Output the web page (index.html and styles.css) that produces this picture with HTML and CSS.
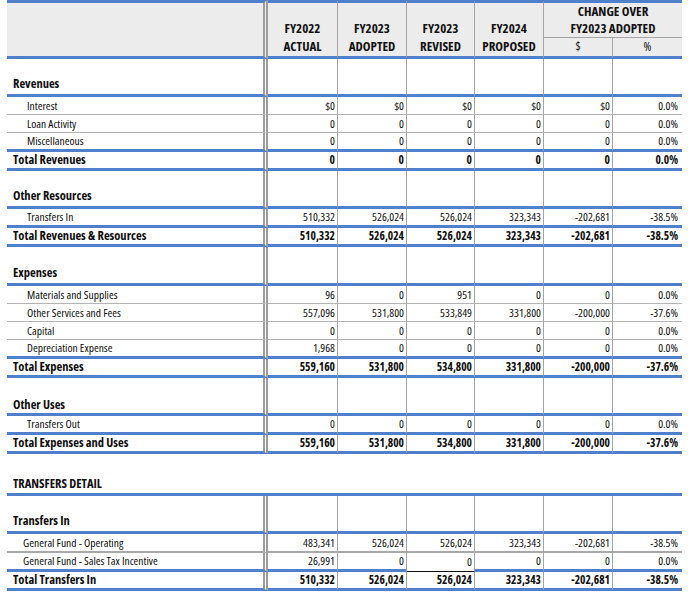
FILE: index.html
```html
<!DOCTYPE html>
<html>
<head>
<meta charset="utf-8">
<link rel="stylesheet" href="styles.css">
</head>
<body>
<div class="page">
<table class="budget">
  <colgroup>
    <col class="c-lbl"><col class="c-a"><col class="c-b"><col class="c-c"><col class="c-d"><col class="c-e"><col class="c-f">
  </colgroup>
  <thead>
    <tr class="hdr-a">
      <th class="lbl" rowspan="2"></th>
      <th class="yr" rowspan="2">FY2022<br>ACTUAL</th>
      <th class="yr" rowspan="2">FY2023<br>ADOPTED</th>
      <th class="yr" rowspan="2">FY2023<br>REVISED</th>
      <th class="yr" rowspan="2">FY2024<br>PROPOSED</th>
      <th class="chg" colspan="2">CHANGE OVER<br>FY2023 ADOPTED</th>
    </tr>
    <tr class="hdr-b">
      <th class="sub">$</th>
      <th class="sub end">%</th>
    </tr>
  </thead>
  <tbody>
    <tr class="sec"><td class="lbl">Revenues</td><td></td><td></td><td></td><td></td><td></td><td class="end"></td></tr>
    <tr class="item"><td class="lbl">Interest</td><td>$0</td><td>$0</td><td>$0</td><td>$0</td><td>$0</td><td class="end">0.0%</td></tr>
    <tr class="item"><td class="lbl">Loan Activity</td><td>0</td><td>0</td><td>0</td><td>0</td><td>0</td><td class="end">0.0%</td></tr>
    <tr class="item last"><td class="lbl">Miscellaneous</td><td>0</td><td>0</td><td>0</td><td>0</td><td>0</td><td class="end">0.0%</td></tr>
    <tr class="tot"><td class="lbl">Total Revenues</td><td>0</td><td>0</td><td>0</td><td>0</td><td>0</td><td class="end">0.0%</td></tr>

    <tr class="sec"><td class="lbl">Other Resources</td><td></td><td></td><td></td><td></td><td></td><td class="end"></td></tr>
    <tr class="item last"><td class="lbl">Transfers In</td><td>510,332</td><td>526,024</td><td>526,024</td><td>323,343</td><td>-202,681</td><td class="end">-38.5%</td></tr>
    <tr class="tot"><td class="lbl">Total Revenues &amp; Resources</td><td>510,332</td><td>526,024</td><td>526,024</td><td>323,343</td><td>-202,681</td><td class="end">-38.5%</td></tr>

    <tr class="sec tall"><td class="lbl">Expenses</td><td></td><td></td><td></td><td></td><td></td><td class="end"></td></tr>
    <tr class="item"><td class="lbl">Materials and Supplies</td><td>96</td><td>0</td><td>951</td><td>0</td><td>0</td><td class="end">0.0%</td></tr>
    <tr class="item"><td class="lbl">Other Services and Fees</td><td>557,096</td><td>531,800</td><td>533,849</td><td>331,800</td><td>-200,000</td><td class="end">-37.6%</td></tr>
    <tr class="item"><td class="lbl">Capital</td><td>0</td><td>0</td><td>0</td><td>0</td><td>0</td><td class="end">0.0%</td></tr>
    <tr class="item last"><td class="lbl">Depreciation Expense</td><td>1,968</td><td>0</td><td>0</td><td>0</td><td>0</td><td class="end">0.0%</td></tr>
    <tr class="tot"><td class="lbl">Total Expenses</td><td>559,160</td><td>531,800</td><td>534,800</td><td>331,800</td><td>-200,000</td><td class="end">-37.6%</td></tr>

    <tr class="sec low"><td class="lbl">Other Uses</td><td></td><td></td><td></td><td></td><td></td><td class="end"></td></tr>
    <tr class="item last"><td class="lbl">Transfers Out</td><td>0</td><td>0</td><td>0</td><td>0</td><td>0</td><td class="end">0.0%</td></tr>
    <tr class="tot"><td class="lbl">Total Expenses and Uses</td><td>559,160</td><td>531,800</td><td>534,800</td><td>331,800</td><td>-200,000</td><td class="end">-37.6%</td></tr>
  </tbody>
</table>

<div class="detail-title">TRANSFERS DETAIL</div>

<table class="budget detail">
  <colgroup>
    <col class="c-lbl"><col class="c-a"><col class="c-b"><col class="c-c"><col class="c-d"><col class="c-e"><col class="c-f">
  </colgroup>
  <tbody>
    <tr class="sec"><td class="lbl">Transfers In</td><td></td><td></td><td></td><td></td><td></td><td class="end"></td></tr>
    <tr class="item thick"><td class="lbl">General Fund - Operating</td><td>483,341</td><td>526,024</td><td>526,024</td><td>323,343</td><td>-202,681</td><td class="end">-38.5%</td></tr>
    <tr class="item last"><td class="lbl">General Fund - Sales Tax Incentive</td><td>26,991</td><td>0</td><td class="rule">0</td><td>0</td><td>0</td><td class="end">0.0%</td></tr>
    <tr class="tot"><td class="lbl">Total Transfers In</td><td>510,332</td><td>526,024</td><td>526,024</td><td>323,343</td><td>-202,681</td><td class="end">-38.5%</td></tr>
  </tbody>
</table>
</div>
</body>
</html>
```

FILE: styles.css
```css
html, body {
  margin: 0;
  padding: 0;
  background: #ffffff;
}

.page {
  padding-left: 7px;
  font-family: "Open Sans", "DejaVu Sans Condensed", sans-serif;
  font-stretch: 75%;
  color: #0d0d0d;
}

.budget {
  width: 675px;
  table-layout: fixed;
  border-collapse: separate;
  border-spacing: 0;
}

.c-lbl { width: 261px; }
.c-a { width: 70px; }
.c-b { width: 69px; }
.c-c { width: 68px; }
.c-d { width: 69px; }
.c-e { width: 69px; }
.c-f { width: 69px; }

.budget th,
.budget td {
  box-sizing: border-box;
  padding: 0;
  white-space: nowrap;
  font-stretch: 75%;
}

/* header */
.budget thead th {
  background: #ececec;
  font-weight: 700;
  font-size: 13px;
  color: #111111;
  text-align: center;
  border-right: 1px solid #a4a4a4;
}

.hdr-a th {
  height: 38px;
  border-top: 3px solid #5080cc;
}

.hdr-b th {
  height: 21px;
  border-bottom: 3px solid #5080cc;
}

.budget thead th.lbl {
  border-right: 5px double #9c9c9c;
  border-bottom: 3px solid #5080cc;
}

.budget thead th.yr {
  vertical-align: bottom;
  line-height: 18px;
  padding-bottom: 1px;
  border-bottom: 3px solid #5080cc;
}

.budget thead th.chg {
  line-height: 17px;
  vertical-align: middle;
  border-right: none;
  border-bottom: 1px solid #a4a4a4;
}

.budget thead th.sub {
  font-weight: 400;
  font-size: 12px;
  line-height: 18px;
}

.budget thead th.end,
.budget td.end {
  border-right: none;
}

/* body cells */
.budget td {
  font-size: 11.5px;
  text-align: right;
  padding-right: 2px;
  border-right: 1px solid #a4a4a4;
  vertical-align: middle;
  line-height: 14px;
}

.budget td.end {
  padding-right: 4px;
}

.budget td.lbl {
  text-align: left;
  padding-left: 20px;
  border-right: 5px double #9c9c9c;
}

/* section header rows */
.sec td {
  height: 38px;
  vertical-align: bottom;
  border-bottom: 3px solid #5080cc;
}

.sec.tall td {
  height: 39px;
}

.sec td.lbl {
  font-weight: 700;
  font-size: 12.5px;
  line-height: 16px;
  padding-left: 6px;
  padding-bottom: 2px;
}

.sec.low td.lbl {
  padding-bottom: 0;
}

/* line item rows */
.item td {
  height: 18px;
  border-bottom: 1px solid #b4b4b4;
}

.item.last td {
  height: 19px;
  border-bottom: 3px solid #5080cc;
}

.item.thick td {
  height: 19px;
  border-bottom: 2px solid #a8a8a8;
}

.item td.rule {
  border-bottom-color: #111111;
  border-bottom-width: 1px;
}

/* total rows */
.tot td {
  height: 19px;
  font-weight: 700;
  font-size: 11.5px;
  border-bottom: 3px solid #5080cc;
}

.tot td.lbl {
  font-size: 12.5px;
  padding-left: 6px;
}

.detail .item td.lbl {
  padding-left: 16px;
}

.detail {
  border-top: 3px solid #5080cc;
}

.detail-title {
  height: 39px;
  box-sizing: border-box;
  padding-top: 22px;
  padding-left: 6px;
  font-weight: 700;
  font-size: 12.5px;
  line-height: 16px;
  color: #111111;
}
```
